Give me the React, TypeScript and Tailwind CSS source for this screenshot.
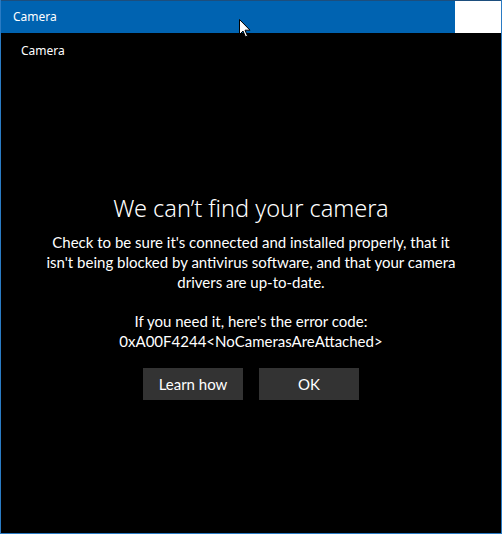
export default function App() {
  return (
    <div className="w-[502px] h-[534px] bg-black border border-[#2a7bc4] border-t-0 flex flex-col overflow-hidden" style={{ fontFamily: '"Noto Sans", "Open Sans", sans-serif' }}>
      {/* Title bar */}
      <div className="h-[33px] border-t border-[#1d4e7d] flex shrink-0">
        <div className="flex-1 bg-[#0063b1] flex items-center pl-[12px] relative">
          <span className="text-white text-[12px]">Camera</span>
          <svg className="absolute left-[238px] top-[18px]" width="12" height="19" viewBox="0 0 12 19">
            <path d="M0.5 0.5 L0.5 15.5 L4 12 L6.5 18 L8.5 17 L6 11.2 L11 11.2 Z" fill="white" stroke="black" strokeWidth="1" />
          </svg>
        </div>
        <div className="w-[46px] bg-white" />
      </div>

      {/* App header */}
      <div className="pl-[20px] pt-[9px] text-white text-[12px]">Camera</div>

      {/* Error content */}
      <div className="flex flex-col items-center text-center text-white mt-[133px]" style={{ fontFamily: 'Lato, "Noto Sans", sans-serif' }}>
        <h1 className="text-[23.5px] font-light leading-[30px]" style={{ fontFamily: '"Noto Sans", sans-serif' }}>We can’t find your camera</h1>
        <p className="text-[15px] leading-[20px] mt-[9px] whitespace-nowrap">
          Check to be sure it's connected and installed properly, that it
          <br />
          isn't being blocked by antivirus software, and that your camera
          <br />
          drivers are up-to-date.
        </p>
        <p className="text-[15px] leading-[20px] mt-[19px]">
          If you need it, here's the error code:
          <br />
          0xA00F4244&lt;NoCamerasAreAttached&gt;
        </p>
        <div className="flex gap-[16px] mt-[17px]">
          <button className="w-[100px] h-[32px] bg-[#333333] text-white text-[15px]">Learn how</button>
          <button className="w-[100px] h-[32px] bg-[#333333] text-white text-[15px]">OK</button>
        </div>
      </div>
    </div>
  );
}
